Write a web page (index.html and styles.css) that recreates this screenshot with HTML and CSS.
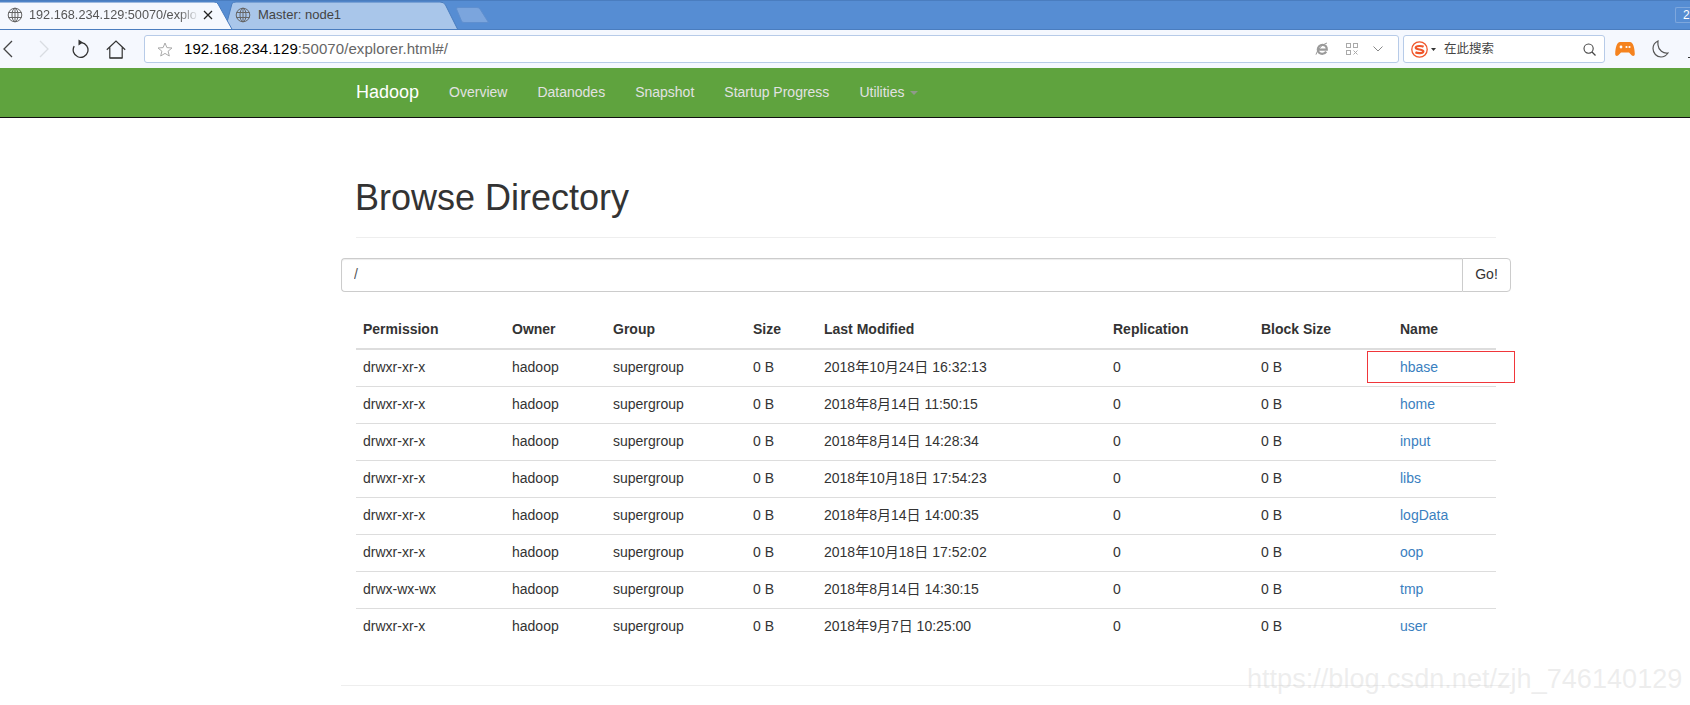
FILE: index.html
```html
<!DOCTYPE html>
<html lang="en">
<head>
<meta charset="utf-8">
<title>Browsing HDFS</title>
<link rel="stylesheet" href="styles.css">
</head>
<body>
<header class="browser">
  <div class="tabstrip">
    <svg class="tab-shapes" width="500" height="31" viewBox="0 0 500 31">
      <path d="M225 30 L232 3.5 Q233 2 236 2 L440 2 Q444 2 445.5 5 L458 30 Z" fill="#a9c6ea" stroke="#4a7dbf"/>
      <path d="M-1 30 L-1 2 L214 2 Q217 2 218 4 L233 31 L-1 31 Z" fill="#f5f8fe" stroke="#4a7dbf"/>
      <path d="M458 7.5 L477 7.5 Q479 7.5 480 9 L488.5 22.5 L464 22.5 Q462 22.5 461.5 21 L456.5 9 Q456.5 7.5 458 7.5 Z" fill="#7ba5dd" stroke="#5f8fcf"/>
    </svg>
    <div class="tab tab-active">
      <svg class="globe" width="16" height="16" viewBox="0 0 16 16"><g fill="none" stroke="#666"><circle cx="8" cy="8" r="6.8"/><ellipse cx="8" cy="8" rx="3" ry="6.8"/><path d="M1.4 5.5H14.6M1.4 10.5H14.6M8 1.2V14.8"/></g></svg>
      <span class="tab-title tab-title-fade">192.168.234.129:50070/explo</span>
      <svg class="close" width="10" height="10" viewBox="0 0 10 10"><path d="M1 1L9 9M9 1L1 9" stroke="#222" stroke-width="1.3" fill="none"/></svg>
    </div>
    <div class="tab tab-other">
      <svg class="globe" width="16" height="16" viewBox="0 0 16 16"><g fill="none" stroke="#666"><circle cx="8" cy="8" r="6.8"/><ellipse cx="8" cy="8" rx="3" ry="6.8"/><path d="M1.4 5.5H14.6M1.4 10.5H14.6M8 1.2V14.8"/></g></svg>
      <span class="tab-title">Master: node1</span>
    </div>
    <div class="tab-count"><span>2</span></div>
  </div>
  <div class="toolbar">
    <svg class="tb-back" width="11" height="18" viewBox="0 0 11 18"><path d="M10 1L2 9L10 17" fill="none" stroke="#444" stroke-width="1.3"/></svg>
    <svg class="tb-forward" width="11" height="18" viewBox="0 0 11 18"><path d="M1 1L9 9L1 17" fill="none" stroke="#d9dce2" stroke-width="1.3"/></svg>
    <svg class="tb-reload" width="18" height="20" viewBox="0 0 18 20"><path d="M10.5 3.6A7.4 7.4 0 1 1 3.2 7.2" fill="none" stroke="#333" stroke-width="1.3"/><path d="M7.5 0.5L12 3.6L7.5 6.6Z" fill="#333"/></svg>
    <svg class="tb-home" width="20" height="19" viewBox="0 0 20 19"><path d="M0.8 9.8L10 1L19.2 9.8M3.8 7.6V18H16.2V7.6" fill="none" stroke="#333" stroke-width="1.2"/><path d="M3.8 18H16.2" stroke="#333" stroke-width="1.2"/></svg>
    <div class="address">
      <svg class="star" width="16" height="15" viewBox="0 0 16 15"><path d="M8 1L9.9 5.6L15 6L11.1 9.2L12.3 14L8 11.4L3.7 14L4.9 9.2L1 6L6.1 5.6Z" fill="none" stroke="#aaa"/></svg>
      <span class="url"><span class="url-host">192.168.234.129</span>:50070/explorer.html#/</span>
      <svg class="ie" width="14" height="14" viewBox="0 0 14 14"><path d="M3.2 7.6H11.8C12 4.6 10 2.8 7.6 2.8C4.8 2.8 2.8 5 2.8 7.6C2.8 10.2 4.8 11.8 7.2 11.8C9 11.8 10.4 11 11.2 9.6" fill="none" stroke="#9a9a9a" stroke-width="2.2"/><path d="M1 12.6C2.4 8 6.4 3 12 1" fill="none" stroke="#9a9a9a"/></svg>
      <svg class="qr" width="12" height="12" viewBox="0 0 12 12"><g fill="none" stroke="#aaa"><rect x="0.5" y="0.5" width="4" height="4"/><rect x="7.5" y="0.5" width="4" height="4"/><rect x="0.5" y="7.5" width="4" height="4"/><path d="M7.5 7.5L11.5 11.5M11.5 7.5L7.5 11.5"/></g></svg>
      <svg class="addr-more" width="10" height="6" viewBox="0 0 10 6"><path d="M0.5 0.5L5 5L9.5 0.5" fill="none" stroke="#888"/></svg>
    </div>
    <div class="search">
      <svg class="sogou" width="17" height="17" viewBox="0 0 17 17"><circle cx="8.5" cy="8.5" r="7.7" fill="#fff" stroke="#f0562a" stroke-width="1.3"/><path d="M12.6 5.8C11 4.8 5 4.4 4.7 6.6C4.4 9 12.6 8 12.4 10.4C12.2 12.6 6.4 12.4 4.4 11.2" fill="none" stroke="#f0562a" stroke-width="2.2"/></svg>
      <svg class="sogou-caret" width="5" height="3" viewBox="0 0 5 3"><path d="M0 0H5L2.5 3Z" fill="#333"/></svg>
      <span class="search-text">在此搜索</span>
      <svg class="mag" width="13" height="13" viewBox="0 0 13 13"><circle cx="5.6" cy="5.6" r="4.6" fill="none" stroke="#444" stroke-width="1.1"/><path d="M9 9L12.5 12.5" stroke="#444" stroke-width="1.3"/></svg>
    </div>
    <svg class="game" width="20" height="16" viewBox="0 0 20 16"><path d="M5 1H15C18 1 19.6 6 19.8 13C19.8 15 18 15.5 16.6 14.2L14 11.6H6L3.4 14.2C2 15.5 0.2 15 0.2 13C0.4 6 2 1 5 1Z" fill="#f5831f"/><circle cx="6" cy="6" r="1.4" fill="#fff"/><circle cx="11.5" cy="6" r="1.1" fill="#fff"/><circle cx="14.5" cy="6" r="1.1" fill="#fff"/></svg>
    <svg class="moon" width="17" height="18" viewBox="0 0 17 18"><path d="M6 1C3 2.4 1 5.2 1 8.6C1 13.2 4.6 17 9 17C11.8 17 14.4 15.4 16 13C11.4 14 6.4 10 6 5C5.9 3.6 5.9 2.2 6 1Z" fill="none" stroke="#555" stroke-width="1.2"/></svg>
    <span class="tb-dot"></span>
  </div>
</header>

<nav class="navbar">
  <a class="brand" href="#">Hadoop</a>
  <a class="nav-link" href="#">Overview</a>
  <a class="nav-link" href="#">Datanodes</a>
  <a class="nav-link" href="#">Snapshot</a>
  <a class="nav-link" href="#">Startup Progress</a>
  <a class="nav-link" href="#">Utilities <span class="caret"></span></a>
</nav>

<main class="container">
  <div class="page-header"><h1>Browse Directory</h1></div>
  <form class="path-group">
    <input class="path-input" type="text" value="/">
    <button class="go" type="button">Go!</button>
  </form>
  <table class="listing">
    <colgroup>
      <col class="c-perm"><col class="c-owner"><col class="c-group"><col class="c-size"><col class="c-date"><col class="c-repl"><col class="c-block"><col class="c-name">
    </colgroup>
    <thead>
      <tr><th>Permission</th><th>Owner</th><th>Group</th><th>Size</th><th>Last Modified</th><th>Replication</th><th>Block Size</th><th>Name</th></tr>
    </thead>
    <tbody>
      <tr><td>drwxr-xr-x</td><td>hadoop</td><td>supergroup</td><td>0 B</td><td>2018年10月24日 16:32:13</td><td>0</td><td>0 B</td><td class="name-cell"><a href="#">hbase</a><span class="highlight"></span></td></tr>
      <tr><td>drwxr-xr-x</td><td>hadoop</td><td>supergroup</td><td>0 B</td><td>2018年8月14日 11:50:15</td><td>0</td><td>0 B</td><td><a href="#">home</a></td></tr>
      <tr><td>drwxr-xr-x</td><td>hadoop</td><td>supergroup</td><td>0 B</td><td>2018年8月14日 14:28:34</td><td>0</td><td>0 B</td><td><a href="#">input</a></td></tr>
      <tr><td>drwxr-xr-x</td><td>hadoop</td><td>supergroup</td><td>0 B</td><td>2018年10月18日 17:54:23</td><td>0</td><td>0 B</td><td><a href="#">libs</a></td></tr>
      <tr><td>drwxr-xr-x</td><td>hadoop</td><td>supergroup</td><td>0 B</td><td>2018年8月14日 14:00:35</td><td>0</td><td>0 B</td><td><a href="#">logData</a></td></tr>
      <tr><td>drwxr-xr-x</td><td>hadoop</td><td>supergroup</td><td>0 B</td><td>2018年10月18日 17:52:02</td><td>0</td><td>0 B</td><td><a href="#">oop</a></td></tr>
      <tr><td>drwx-wx-wx</td><td>hadoop</td><td>supergroup</td><td>0 B</td><td>2018年8月14日 14:30:15</td><td>0</td><td>0 B</td><td><a href="#">tmp</a></td></tr>
      <tr><td>drwxr-xr-x</td><td>hadoop</td><td>supergroup</td><td>0 B</td><td>2018年9月7日 10:25:00</td><td>0</td><td>0 B</td><td><a href="#">user</a></td></tr>
    </tbody>
  </table>
  <hr class="footer-rule">
</main>
<div class="watermark">https://blog.csdn.net/zjh_746140129</div>
</body>
</html>
```
FILE: styles.css
```css
* { box-sizing: border-box; }
html, body { height: 100%; overflow: hidden; }
body {
  margin: 0;
  position: relative;
  background: #fff;
  color: #333;
  font: 14px/20px "Liberation Sans", "Noto Sans CJK SC", sans-serif;
}
a { color: #3a80c0; text-decoration: none; }

/* browser chrome */
.browser { height: 68px; background: #f5f8fe; }
.tabstrip {
  position: relative;
  display: flex;
  align-items: center;
  height: 30px;
  overflow: hidden;
  background: #568dd3;
  border-top: 1px solid #4a7dbf;
  border-bottom: 1px solid #4a7dbf;
}
.tab-shapes { position: absolute; left: 0; top: -1px; }
.tab {
  position: relative;
  display: flex;
  align-items: center;
  height: 28px;
  font-size: 13px;
}
.tab-active { width: 235px; padding-left: 7px; }
.tab-other { padding-left: 0; }
.globe { flex: none; }
.tab-title { margin-left: 6px; white-space: nowrap; color: #555; }
.tab-title-fade {
  width: 168px;
  font-size: 12.7px;
  -webkit-mask-image: linear-gradient(to right, #000 150px, transparent 170px);
  mask-image: linear-gradient(to right, #000 150px, transparent 170px);
}
.close { margin-left: 6px; flex: none; }
.tab-other .tab-title { margin-left: 7px; color: #444; }
.tab-count {
  position: relative;
  flex: none;
  margin-left: auto;
  width: 15px;
  height: 16px;
  padding-left: 7px;
  border: 1px solid #7ea7dd;
  border-right: 0;
  border-radius: 2px 0 0 2px;
  color: #fff;
  font-size: 12px;
  line-height: 14px;
}

.toolbar {
  display: flex;
  align-items: center;
  height: 38px;
  padding: 0 0 0 2px;
  background: #f5f8fe;
}
.tb-back { flex: none; }
.tb-forward { flex: none; margin-left: 26px; }
.tb-reload { flex: none; margin-left: 21px; }
.tb-home { flex: none; margin-left: 17px; }
.address {
  flex: none;
  display: flex;
  align-items: center;
  width: 1255px;
  height: 28px;
  margin-left: 18px;
  padding-left: 12px;
  background: #fff;
  border: 1px solid #b7cbe8;
  border-radius: 3px;
}
.star { flex: none; }
.url { margin-left: 11px; font-size: 15px; letter-spacing: 0.08px; color: #666; flex: 1; white-space: nowrap; }
.url-host { color: #000; }
.ie { flex: none; }
.qr { flex: none; margin-left: 17px; }
.addr-more { flex: none; margin-left: 15px; margin-right: 15px; }
.search {
  flex: none;
  display: flex;
  align-items: center;
  width: 202px;
  height: 28px;
  margin-left: 4px;
  padding-left: 7px;
  background: #fff;
  border: 1px solid #b7cbe8;
  border-radius: 3px;
}
.sogou { flex: none; }
.sogou-caret { flex: none; margin-left: 3px; }
.search-text { flex: 1; margin-left: 8px; font-size: 12.5px; color: #444; white-space: nowrap; }
.mag { flex: none; margin-right: 8px; }
.game { flex: none; margin-left: 10px; }
.moon { flex: none; margin-left: 17px; }
.tb-dot { flex: none; width: 2px; height: 1px; margin: 16px 0 0 19px; background: #333; }

/* navbar */
.navbar {
  display: flex;
  align-items: stretch;
  height: 50px;
  padding-left: 341px;
  background: #5fa33e;
  border-bottom: 1px solid #111;
}
.brand {
  padding: 14px 15px 16px;
  color: #fff;
  font-size: 18px;
  line-height: 20px;
}
.nav-link {
  padding: 14px 15px 16px;
  color: #e2e2e2;
  line-height: 20px;
}
.caret {
  display: inline-block;
  width: 0;
  height: 0;
  margin-left: 2px;
  vertical-align: middle;
  border-top: 4px solid #8f9a8a;
  border-left: 4px solid transparent;
  border-right: 4px solid transparent;
}

/* content */
.container { width: 1170px; margin-left: 341px; padding: 0 15px; }
.page-header { margin: 40px 0 20px; padding: 20px 0 9px; border-bottom: 1px solid #eee; }
h1 { margin: 0 0 10px -1px; font-size: 36px; font-weight: 500; line-height: 39.6px; color: #333; }
.path-group { display: flex; height: 34px; margin: 0 -15px 20px; }
.path-input {
  flex: 1;
  min-width: 0;
  padding: 4px 12px 6px;
  font: inherit;
  color: #555;
  background: #fff;
  border: 1px solid #ccc;
  border-right: 0;
  border-radius: 4px 0 0 4px;
  box-shadow: inset 0 1px 1px rgba(0, 0, 0, 0.075);
}
.go {
  width: 49px;
  padding: 0 0 2px;
  font: inherit;
  color: #333;
  background: #fff;
  border: 1px solid #ccc;
  border-radius: 0 4px 4px 0;
}
.listing { width: 1140px; table-layout: fixed; border-collapse: collapse; margin-bottom: 20px; }
.c-perm { width: 149px; }
.c-owner { width: 101px; }
.c-group { width: 140px; }
.c-size { width: 71px; }
.c-date { width: 289px; }
.c-repl { width: 148px; }
.c-block { width: 139px; }
.c-name { width: 103px; }
th { padding: 7px 9px 9px 7px; text-align: left; font-weight: 700; border-bottom: 2px solid #ddd; }
td { padding: 7px 9px 9px 7px; border-top: 1px solid #ddd; white-space: nowrap; }
.name-cell { position: relative; }
.highlight {
  position: absolute;
  left: -26px;
  top: 1px;
  width: 148px;
  height: 32px;
  border: 1px solid #f0363a;
}
.footer-rule { height: 0; margin: 40px -15px 0; border: 0; border-top: 1px solid #eee; }

.watermark {
  position: absolute;
  left: 1247px;
  top: 661px;
  font-size: 27.1px;
  line-height: 36px;
  white-space: nowrap;
  color: rgba(205, 205, 205, 0.35);
}
```
